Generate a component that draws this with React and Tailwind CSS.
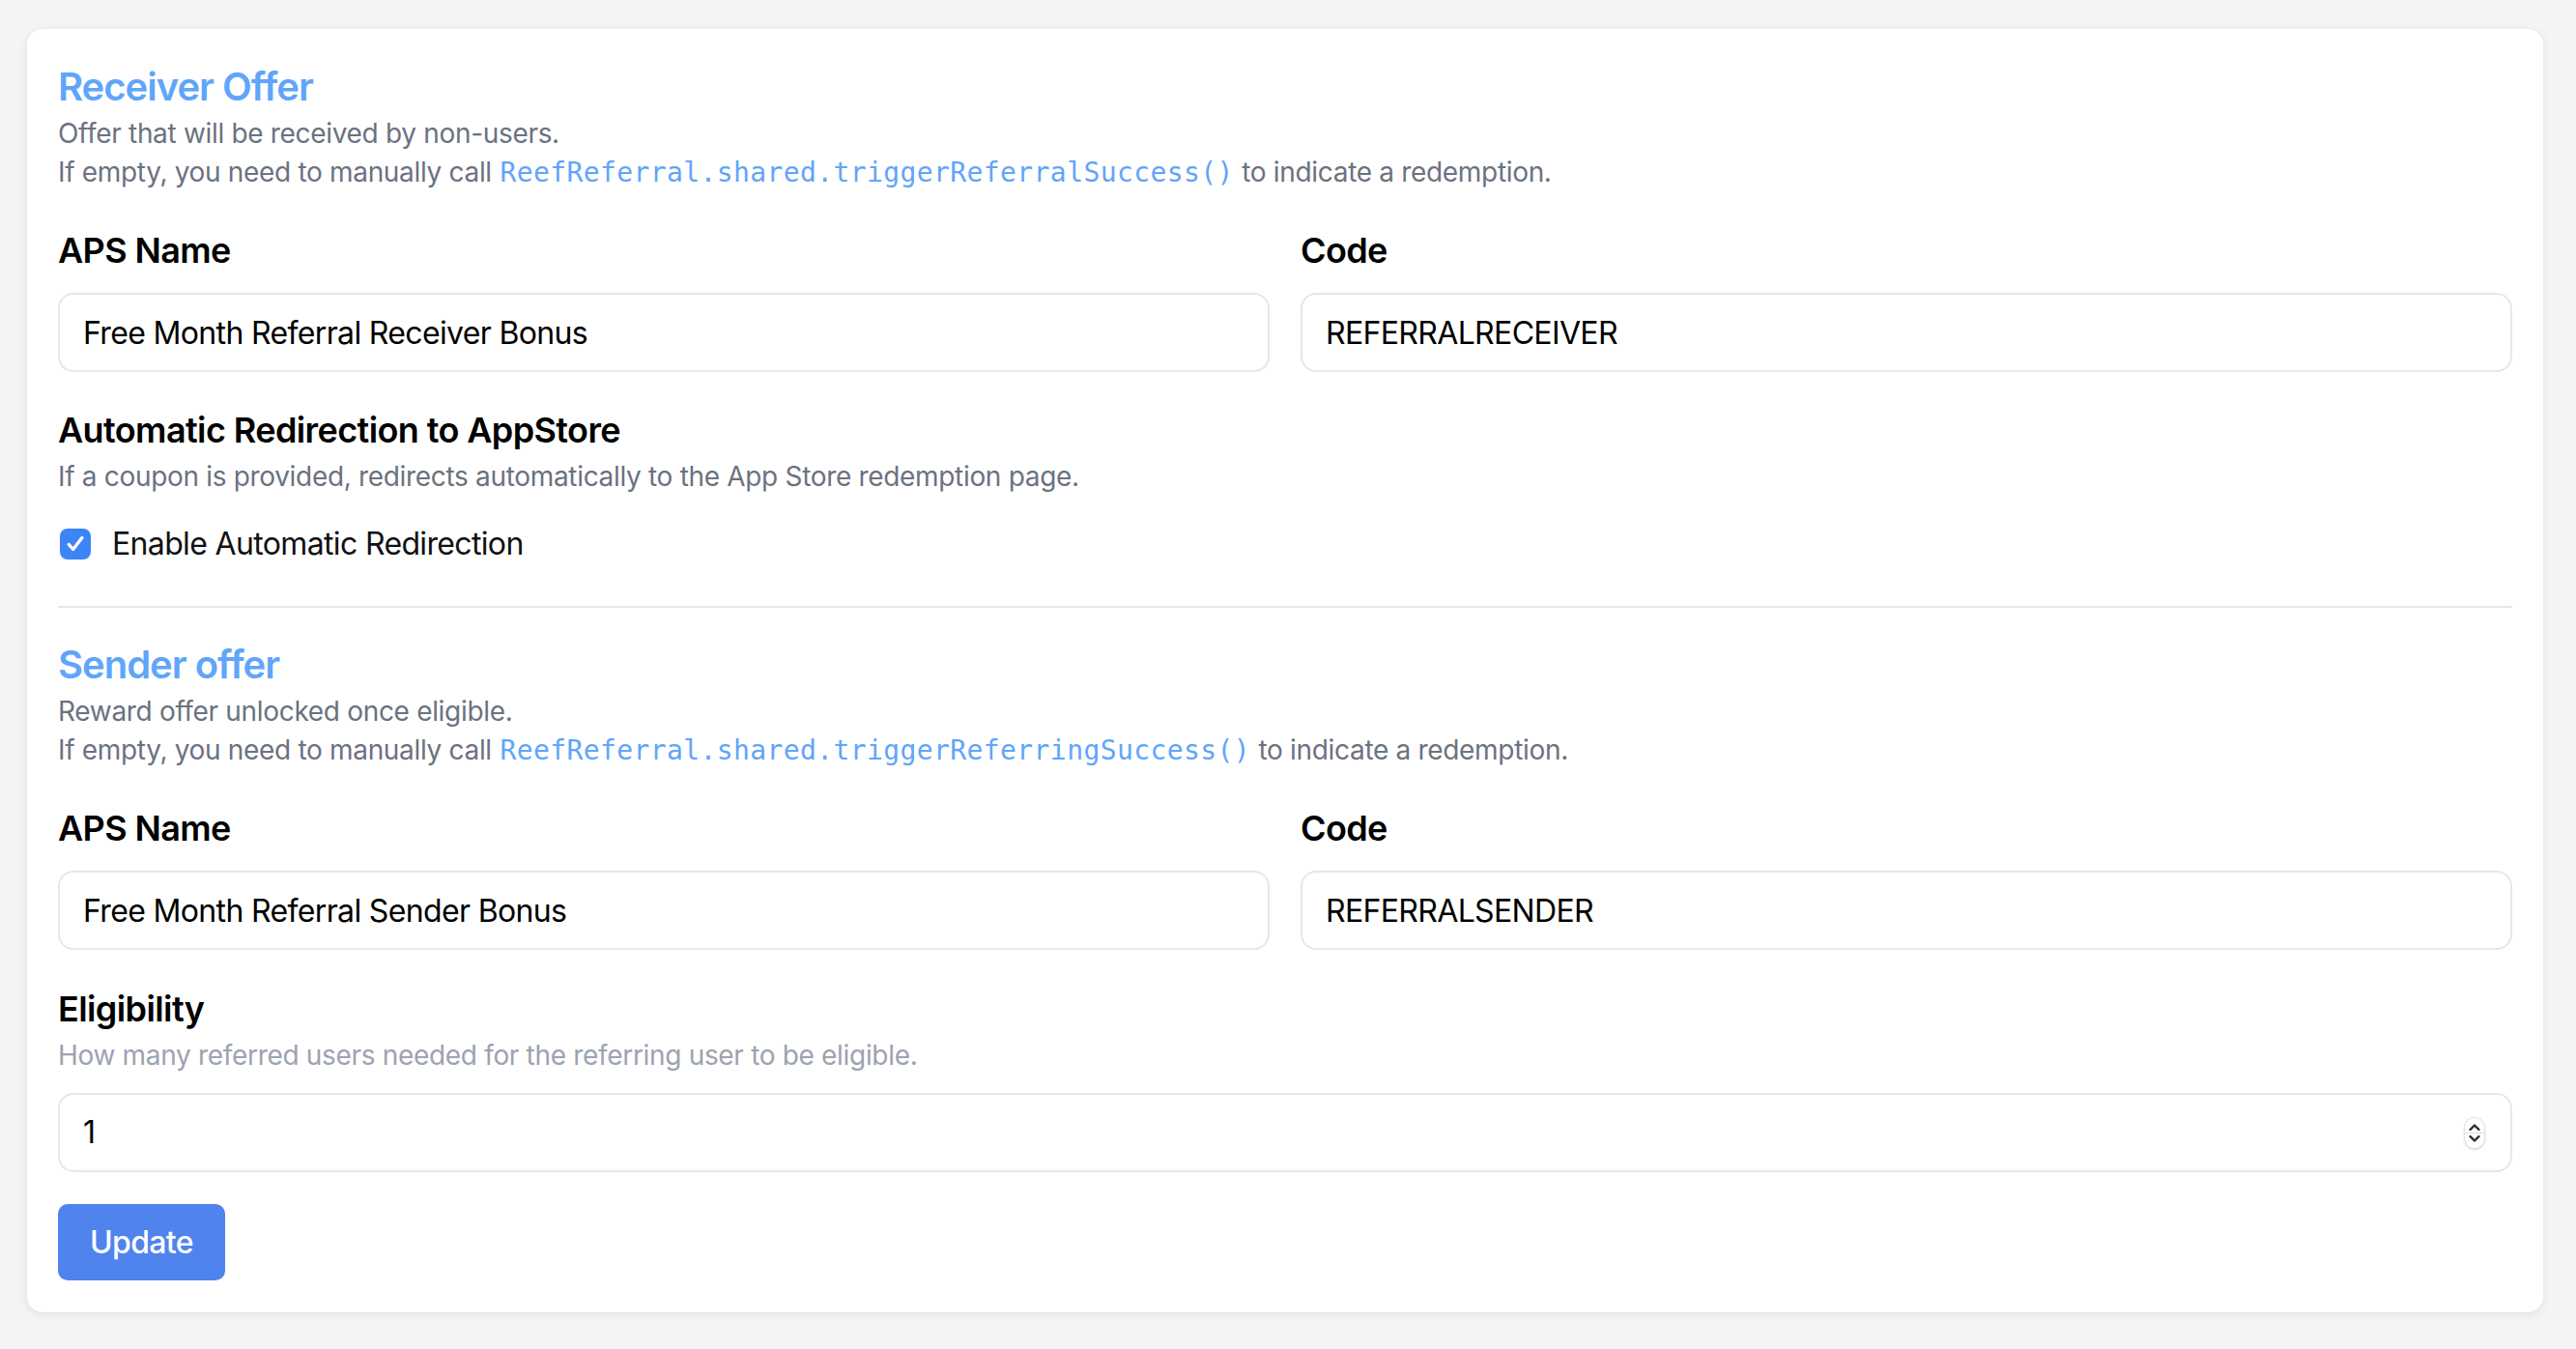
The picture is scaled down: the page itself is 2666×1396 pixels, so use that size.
import React from 'react'

const sans = { fontFamily: 'Inter, "Noto Sans", sans-serif' }

function Code({ children }) {
  return (
    <code className="px-[1px] font-['DejaVu_Sans_Mono',monospace] text-[28px] tracking-[0.4px] text-[#60a5fa]">
      {children}
    </code>
  )
}

function Field({ label, value }) {
  return (
    <div className="flex flex-col">
      <label className="mb-[16px] text-[36px] leading-[56px] font-semibold tracking-[-0.6px] text-black">{label}</label>
      <input
        readOnly
        value={value}
        className="h-[82px] rounded-[16px] border-2 border-[#e6e7eb] bg-white px-[24px] text-[32px] tracking-[-0.65px] text-black outline-none"
      />
    </div>
  )
}

function Checkbox() {
  return (
    <span className="flex h-[32px] w-[32px] items-center justify-center rounded-[8px] bg-[#3d85f6]">
      <svg width="22" height="22" viewBox="0 0 24 24" fill="none">
        <path d="M4.5 12.5l5 5.5L19.5 5" stroke="white" strokeWidth="3.6" strokeLinecap="round" strokeLinejoin="round" />
      </svg>
    </span>
  )
}

function Stepper() {
  return (
    <span className="flex h-[33px] w-[22px] flex-col items-center justify-center rounded-[11px] border border-[#e3e3e3] bg-white shadow-[0_1px_2px_rgba(0,0,0,0.15)]">
      <svg width="14" height="10" viewBox="0 0 14 10" fill="none">
        <path d="M2.5 7L7 2.5 11.5 7" stroke="#2b2b2b" strokeWidth="2.4" strokeLinecap="round" strokeLinejoin="round" />
      </svg>
      <span className="h-px w-full bg-[#dcdcdc]" />
      <svg width="14" height="10" viewBox="0 0 14 10" fill="none">
        <path d="M2.5 3L7 7.5 11.5 3" stroke="#2b2b2b" strokeWidth="2.4" strokeLinecap="round" strokeLinejoin="round" />
      </svg>
    </span>
  )
}

export default function App() {
  return (
    <div className="min-h-[1396px] bg-[#f3f4f6] pt-[30px] pb-[40px]" style={sans}>
      <div className="ml-[28px] w-[2604px] rounded-[16px] bg-white px-[32px] pt-[32px] pb-[33px] shadow-[0_2px_8px_rgba(0,0,0,0.09)]">
        {/* Receiver */}
        <h2 className="text-[40px] leading-[56px] font-semibold tracking-[-1px] text-[#60a5fa]">Receiver Offer</h2>
        <p className="text-[28px] leading-[40px] tracking-[-0.32px] text-[#6b7280]">Offer that will be received by non-users.</p>
        <p className="text-[28px] leading-[40px] tracking-[-0.32px] text-[#6b7280]">
          If empty, you need to manually call <Code>ReefReferral.shared.triggerReferralSuccess()</Code> to indicate a redemption.
        </p>

        <div className="mt-[32px] grid grid-cols-2 gap-x-[32px]">
          <Field label="APS Name" value="Free Month Referral Receiver Bonus" />
          <Field label="Code" value="REFERRALRECEIVER" />
        </div>

        <h3 className="mt-[32px] text-[36px] leading-[56px] font-semibold tracking-[-0.6px] text-black">Automatic Redirection to AppStore</h3>
        <p className="text-[28px] leading-[40px] tracking-[-0.32px] text-[#6b7280]">If a coupon is provided, redirects automatically to the App Store redemption page.</p>
        <div className="mt-[26px] flex items-center gap-[22px] pl-[2px]">
          <Checkbox />
          <span className="text-[32px] leading-[48px] tracking-[-0.65px] text-[#111]">Enable Automatic Redirection</span>
        </div>

        {/* Sender */}
        <div className="mt-[40px] border-t-2 border-[#e5e7eb] pt-[31px]">
          <h2 className="text-[40px] leading-[56px] font-semibold tracking-[-1px] text-[#60a5fa]">Sender offer</h2>
          <p className="text-[28px] leading-[40px] tracking-[-0.32px] text-[#6b7280]">Reward offer unlocked once eligible.</p>
          <p className="text-[28px] leading-[40px] tracking-[-0.32px] text-[#6b7280]">
            If empty, you need to manually call <Code>ReefReferral.shared.triggerReferringSuccess()</Code> to indicate a redemption.
          </p>

          <div className="mt-[32px] grid grid-cols-2 gap-x-[32px]">
            <Field label="APS Name" value="Free Month Referral Sender Bonus" />
            <Field label="Code" value="REFERRALSENDER" />
          </div>

          <h3 className="mt-[33px] text-[36px] leading-[56px] font-semibold tracking-[-0.6px] text-black">Eligibility</h3>
          <p className="text-[28px] leading-[40px] tracking-[-0.32px] text-[#9ca3af]">How many referred users needed for the referring user to be eligible.</p>
          <div className="mt-[19px] flex h-[82px] items-center rounded-[16px] border-2 border-[#e6e7eb] bg-white pl-[24px] pr-[26px]">
            <input readOnly value="1" className="flex-1 bg-transparent text-[32px] text-black outline-none" />
            <Stepper />
          </div>

          <button className="mt-[33px] h-[79px] rounded-[10px] bg-[#4f84ee] px-[33px] text-[32px] font-medium tracking-[-0.65px] text-white">
            Update
          </button>
        </div>
      </div>
    </div>
  )
}
